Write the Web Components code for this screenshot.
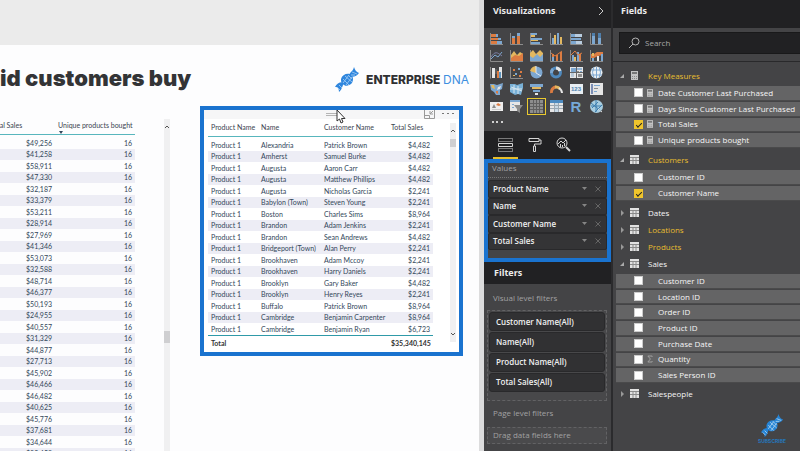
<!DOCTYPE html>
<html lang="en">
<head>
<meta charset="utf-8">
<title>Report editor</title>
<style>
html,body{height:100%}
body{margin:0;overflow:hidden;background:#fff;font-family:"Open Sans","Noto Sans",sans-serif;font-size:8px}
report-editor{height:100%}
</style>
</head>
<body>
<report-editor></report-editor>
<script>
const sold = "49,256 41,258 58,911 47,330 32,187 33,379 53,211 28,914 27,969 41,346 53,073 32,588 48,714 46,377 50,193 24,955 40,557 31,329 44,877 27,713 45,902 46,466 46,482 40,625 45,776 37,681 34,644 32,459".split(" ");
const TABLES = {
  products: {
    widths: [68, 80], align: ["h", "n"],
    head: ["Total Sales", "Unique products bought"],
    rows: sold.map(v => ["$" + v, "16"])
  },
  customers: {
    widths: [50, 63, 67, 45], align: ["", "", "", "h"],
    head: ["Product Name", "Name", "Customer Name", "Total Sales"],
    rows: [
      ["Alexandria", "Patrick Brown", "$4,482"], ["Amherst", "Samuel Burke", "$4,482"],
      ["Augusta", "Aaron Carr", "$4,482"], ["Augusta", "Matthew Phillips", "$4,482"],
      ["Augusta", "Nicholas Garcia", "$2,241"], ["Babylon (Town)", "Steven Young", "$2,241"],
      ["Boston", "Charles Sims", "$8,964"], ["Brandon", "Adam Jenkins", "$2,241"],
      ["Brandon", "Sean Andrews", "$4,482"], ["Bridgeport (Town)", "Alan Perry", "$2,241"],
      ["Brookhaven", "Adam Mccoy", "$2,241"], ["Brookhaven", "Harry Daniels", "$2,241"],
      ["Brooklyn", "Gary Baker", "$4,482"], ["Brooklyn", "Henry Reyes", "$2,241"],
      ["Buffalo", "Patrick Brown", "$8,964"], ["Cambridge", "Benjamin Carpenter", "$8,964"],
      ["Cambridge", "Benjamin Ryan", "$6,723"]
    ].map(r => ["Product 1", ...r]),
    foot: ["Total", "", "", "$35,340,145"]
  }
};

const B = "#7da7d0", O = "#dc7c42", W = "#e6e6e6", G = "#8c8c8c", Y = "#e3b860";
const bar = (x, y, w, h, c) => `<rect x="${x}" y="${y}" width="${w}" height="${h}" fill="${c}"/>`;
const ln = (d, c, w = 1) => `<path d="${d}" fill="none" stroke="${c}" stroke-width="${w}"/>`;
const fl = (d, c) => `<path d="${d}" fill="${c}"/>`;
const axes = ln("M1.5 1V12.5H14", G);
const VISUALS = {
  "Stacked bar chart": axes + bar(2,2,5,3,O)+bar(7,2,2,3,B)+bar(2,6,7,2,O)+bar(9,6,3,2,B)+bar(2,9,6,3,O)+bar(8,9,5,3,B),
  "Stacked column chart": axes + bar(3,6,3,6,O)+bar(3,4,3,2,B)+bar(8,4,3,8,O)+bar(8,1,3,3,B),
  "Clustered bar chart": axes + bar(2,1,6,2,B)+bar(2,3,4,2,Y)+bar(2,6,11,2,B)+bar(2,8,7,1,Y)+bar(2,10,9,2,B),
  "Clustered column chart": axes + bar(3,6,2,6,B)+bar(5,3,2,9,Y)+bar(8,1,2,11,B)+bar(11,5,2,7,Y),
  "100% stacked bar chart": axes + bar(2,2,4,3,B)+bar(6,2,7,3,"#b9cde0")+bar(2,6,10,2,B)+bar(2,9,5,3,B)+bar(7,9,6,3,"#b9cde0"),
  "100% stacked column chart": axes + bar(3,1,3,11,B)+bar(3,1,3,3,"#4f7eaa")+bar(9,1,3,11,B)+bar(9,1,3,5,"#4f7eaa"),
  "Line chart": axes + ln("M2 10L6 6L9 8L13 3", B)+ln("M2 8C6 2 8 3 13 7", "#7c7fa6"),
  "Area chart": axes + fl("M2 12V6L5 2L8 6L11 3L14 5V12Z", Y)+fl("M2 12V9L6 6L10 7L14 4V12Z", O),
  "Stacked area chart": axes + fl("M1 12V4L4 1L7 5L11 1L14 4V12Z", Y)+fl("M1 12V7L4 9L8 5L11 8L14 5V12Z", B),
  "Line and stacked column chart": axes + bar(3,7,2,5,B)+bar(3,5,2,3,O)+bar(7,6,2,6,O)+bar(11,3,2,9,O)+ln("M2 4L6 7L9 5L13 2", O),
  "Line and clustered column chart": axes + bar(3,6,2,6,B)+bar(5,8,2,4,Y)+bar(8,3,2,9,B)+bar(10,5,2,7,O)+ln("M2 6L6 2L9 6L13 4", O),
  "Ribbon chart": axes + fl("M2 5H5L8 3H14V6L9 7L5 9H2Z", O)+bar(3,9,2,3,B)+bar(8,7,2,5,W)+bar(12,5,2,7,B)+bar(3,4,2,3,Y),
  "Waterfall chart": ln("M1.5 1V12.5", G)+bar(3,2,3,10,W)+bar(6,3,2,5,"#5d5d5d")+bar(8,5,2,7,O)+bar(10,1,3,11,W)+bar(10,6,2,6,"#5b93bd"),
  "Scatter chart": axes + bar(4,3,2,2,O)+bar(9,2,2,2,B)+bar(6,7,2,2,B)+bar(11,5,2,2,O)+bar(4,9,2,1,Y)+bar(10,9,2,2,O),
  "Pie chart": `<circle cx="7.5" cy="6.5" r="6" fill="${B}"/>`+fl("M7 7V0A7 7 0 0 0 1 5Z", Y)+ln("M7 0V7L12 10", "#dce6f0"),
  "Donut chart": `<circle cx="7" cy="6.5" r="4.5" fill="none" stroke="#4f89bd" stroke-width="3"/>`+ln("M7 2A4.5 4.5 0 0 1 11 5", W, 3)+ln("M2.5 7A4.5 4.5 0 0 1 4 3", B, 3),
  "Treemap": bar(1,1,13,11,W)+bar(2,2,5,4,B)+bar(8,2,5,2,"#93b4d3")+bar(8,5,2,2,G)+bar(11,5,2,2,B)+bar(2,7,3,4,"#b8c9d8")+bar(9,8,4,3,G)+ln("M1 6.5H14M7.5 1V12", "#666"),
  "Map": `<circle cx="7.5" cy="6.5" r="6" fill="#eef2f5"/>`+ln("M2 4H13M2 9H13M7.5 1V12M5 1Q2 6 5 12M10 1Q13 6 10 12", B),
  "Filled map": fl("M1 1L5 1L8 2L14 0L13 6L11 7L11 12L7 12L5 9L2 7Z", B)+fl("M2 2L5 2L6 6L3 5Z", Y)+fl("M9 4L12 3L11 6L8 7Z", W)+fl("M7 8L9 8L9 11L7 10Z", O),
  "Shape map": fl("M1 1L6 1L8 2L14 0L14 5L13 8L12 12L9 11L6 12L1 9Z", "#78b0d6")+ln("M1 6H13M5 2V10M9 3V11M2 4L13 8", "#d6e6f0"),
  "Funnel": bar(1,1,13,3,B)+bar(3,4,9,2,Y)+bar(4,7,7,2,B)+bar(6,10,3,2,W),
  "Gauge": ln("M2.5 10A5 5 0 0 1 7 4", O, 3)+ln("M6 4A5 5 0 0 1 11 6", Y, 3)+ln("M10 5Q13 7 13 10", W, 2),
  "Card": bar(1,1,13,10,"#e8eef3")+`<text x="7" y="8" font-size="6" font-weight="700" font-family="Liberation Sans,sans-serif" text-anchor="middle" fill="#4e83b0">123</text>`,
  "Multi-row card": bar(1,0,13,12,W)+bar(2,1,2,10,"#7c8eb5")+bar(5,2,6,1,B)+bar(5,5,4,1,G)+bar(5,8,3,1,B),
  "KPI": bar(1,2,13,9,"#eeeeee")+fl("M3 8L5 4L7 8Z", G)+fl("M7 5L9 3L12 5L10 6Z", O)+ln("M3 9.5H12", "#ccc"),
  "Slicer": bar(1,0,10,11,W)+bar(1,0,10,2,B)+bar(3,4,2,1,B)+bar(3,7,2,1,B)+fl("M5 5H14L11 9V13L8 11V9Z", G),
  "Table": bar(1,0,13,13,"#8d8d8d")+ln("M1 3.5H14M1 6.5H14M1 9.5H14M4.5 0V13M7.5 0V13M10.5 0V13", "#606060"),
  "Matrix": bar(1,0,13,12,W)+bar(1,0,13,3,"#4d8bc0")+bar(6,3,4,9,"#c8d9e6")+ln("M5.5 3V12M9.5 3V12M1 5.5H14M1 8.5H14", "#9aa8b3"),
  "R script visual": `<text x="7" y="12" font-size="15" font-weight="700" font-family="Liberation Sans,sans-serif" text-anchor="middle" fill="#76a9d8">R</text>`,
  "ArcGIS map": `<circle cx="7.5" cy="6.5" r="6.5" fill="#a8cde0"/>`+ln("M2 3L12 11M3 8L9 2M6 12L13 5M2 6H12M7 0V12", "#3e7fae")+ln("M9 9L13 12", W)
};

const dna = (a, b) => `
  <path d="M1 20C3 16 7 14 11 16C8 17 9 22 5 25C5 22 4 20 1 20Z" fill="${a}"/>
  <path d="M15 9C16 4 19 5 20 0C21 3 22 5 25 6C23 9 19 11 15 9Z" fill="${a}"/>
  <path d="M7 12C8 8 12 6 16 7C19 9 20 12 18 16C15 19 11 20 9 17C7 16 7 14 7 12Z" fill="${a}"/>
  <path d="M3 20L6 23M5 18L8 21M9 12L15 18M11 9L18 15M14 8L18 12M17 8L21 8M18 5L23 7M9 16L15 8M12 18L18 10" stroke="${b}" stroke-width="1" fill="none"/>`;

const define = (name, css, html) => customElements.define(name, class extends HTMLElement {
  connectedCallback() {
    if (this.shadowRoot) return;
    const root = this.attachShadow({ mode: "open" });
    root.innerHTML = `<style>*{box-sizing:border-box}${css}</style>` + (typeof html === "function" ? html(this) : html);
  }
});

define("report-editor", `
  :host{display:grid;grid-template-columns:minmax(0,1fr) 128px 188px;overflow:hidden}
`, `<report-canvas></report-canvas><viz-panel></viz-panel><fields-panel></fields-panel>`);

define("data-table", `
  :host{display:block;font:7px/9px Lato,"Open Sans",sans-serif;color:#33475a}
  table{border-collapse:separate;border-spacing:0;table-layout:fixed;width:100%}
  th,td{padding:0 3px;white-space:nowrap;text-align:left;font-weight:400}
  thead th{height:18px;border-bottom:1px solid #58b6bd;color:#3b4450;vertical-align:top;padding-top:4px;position:relative}
  tbody:before{content:"";display:block;height:2px}
  .h,th.n{text-align:right} td.n{text-align:right}
  thead th.h{text-align:left}
  tbody tr:nth-child(even) td{background:#ededf5}
  tbody td{height:11px}
  tbody tr:nth-child(odd) td{height:12px}
  tfoot td{border-top:1px solid #2f9aa8;height:15px;font-weight:700;color:#333}
  i{position:absolute;left:4px;bottom:0;border:2px solid transparent;border-top:3px solid #33475a;border-bottom:0}
`, el => {
  const t = TABLES[el.getAttribute("source")];
  const cells = (r, tag) => r.map((c, i) => `<${tag} class="${t.align[i]}">${c}${tag === "th" && t.align[i] === "n" ? "<i></i>" : ""}</${tag}>`).join("");
  return `<table><colgroup>${t.widths.map(w => `<col style="width:${w}px">`).join("")}</colgroup>
    <thead><tr>${cells(t.head, "th")}</tr></thead>
    <tbody>${t.rows.map(r => `<tr>${cells(r, "td")}</tr>`).join("")}</tbody>
    ${t.foot ? `<tfoot><tr>${cells(t.foot, "td")}</tr></tfoot>` : ""}</table>`;
});

define("scroll-rail", `
  :host{display:flex;flex-direction:column;width:6px;background:#f0f0f1}
  svg{display:block;width:6px;height:6px;flex:none;margin:5px 0}
  i{flex:none;height:var(--thumb,8px);background:#cfcfd1}
  :host([open-ended]) .end{display:none}
  .lead{flex:0 1 var(--lead,0px)} .rest{flex:1}
  path{fill:none;stroke:#555}
`, `<svg viewBox="0 0 6 6"><path d="M1 4L3 2L5 4"/></svg><span class="lead"></span><i></i><span class="rest"></span><svg class="end" viewBox="0 0 6 6"><path d="M1 2L3 4L5 2"/></svg>`);

define("brand-logo", `
  :host{display:flex;align-items:center;gap:6px;font:800 12px/16px Inter,sans-serif;color:#2f3032}
  svg{width:26px;height:26px} span span{font-weight:400;color:#3d8fe0}
`, `<svg viewBox="0 0 26 26">${dna("#2f86dd", "#8fc1f2")}</svg><span>ENTERPRISE <span>DNA</span></span>`);

define("report-visual", `
  :host{display:block;border:4px solid #1a73cf;background:#fff;position:relative}
  header{display:grid;grid-template-columns:1fr 12px 1fr;align-items:center;height:9px;padding:0 5px;background:#f6f6f7}
  header svg{height:9px}
  .grip{height:3px;border:1px solid #b5b5b5;border-width:1px 0}
  .tools{display:flex;justify-content:flex-end;gap:7px}
  .body{display:flex;justify-content:space-between;gap:17px;padding:0 3px 2px 4px}
  ::slotted(data-table){flex:1}
  ::slotted(scroll-rail){margin:4px 0 8px}
  .cursor{position:absolute;left:132px;top:0;width:10px;height:14px}
`, `<header><span></span><span class="grip"></span>
  <span class="tools"><svg width="11" viewBox="0 0 11 9"><path d="M.5 0V8.5H10.5V0M.5 5.5H5.5V8M6 4L9 1M6 1V4H9" fill="none" stroke="#999"/></svg>
  <svg width="12" viewBox="0 0 12 9"><path d="M0 3h2v1H0zM5 3h2v1H5zM10 3h2v1h-2z" fill="#777"/></svg></span></header>
  <div class="body"><slot></slot></div>
  <svg class="cursor" viewBox="0 0 10 14"><path d="M1 0V11L3.5 9L5 13L7 12L5.5 8.5H9Z" fill="#fff" stroke="#333"/></svg>`);

define("report-canvas", `
  :host{display:flex;min-width:0;min-height:0;background:#ebebeb;padding-top:45px}
  main{flex:1;min-width:0;background:#fdfdfe;display:flex;flex-direction:column;overflow:hidden}
  .rail{width:5px;background:#dcdcdd;margin-top:-45px}
  .top{display:flex;justify-content:space-between;align-items:center;height:61px;padding:6px 10px 0 0;flex:none}
  h1{margin:0 0 2px;font:900 22px/26px Inter,"Open Sans",sans-serif;color:#333436;white-space:nowrap}
  brand-logo{margin-top:2px}
  .visuals{display:flex;align-items:flex-start;justify-content:space-between;padding-right:16px;min-height:0;flex:1}
  .left{display:flex;height:100%;width:170px;padding-top:11px;overflow:hidden;justify-content:space-between}
  .left data-table{flex:none;width:148px;margin-left:-13px}
  .left scroll-rail{--lead:196px;--thumb:12px;margin-top:2px}
  report-visual{width:263px}
`, `<main><div class="top"><h1>id customers buy</h1><brand-logo></brand-logo></div>
  <div class="visuals"><div class="left"><data-table source="products"></data-table><scroll-rail open-ended></scroll-rail></div>
  <report-visual><data-table source="customers"></data-table><scroll-rail></scroll-rail></report-visual></div></main><div class="rail"></div>`);

define("viz-icon", `
  :host{display:block}
  button{display:grid;place-items:center;width:100%;height:17px;padding:0;border:0;background:none}
  svg{width:15px;height:13px;overflow:visible}
  :host([selected]) svg{outline:1px solid #e9c92f;outline-offset:1px}
`, el => `<button aria-label="${el.getAttribute("name")}"><svg viewBox="0 0 15 13">${VISUALS[el.getAttribute("name")]}</svg></button>`);

define("field-well", `
  :host{display:flex;align-items:center;gap:7px;flex:1;padding:0 5px 0 4px;background:#343436;border:1px solid #29292b;border-radius:2px;color:#f0f0f0;font-weight:600}
  span{flex:1} button{all:unset;display:flex}
  svg{width:6px;height:6px}
`, `<span><slot></slot></span><button aria-label="Options"><svg viewBox="0 0 6 6"><path d="M0 1H5L2.5 4Z" fill="#858585"/></svg></button><button aria-label="Remove"><svg viewBox="0 0 6 6"><path d="M.5 .5L5.5 5.5M5.500 .5L.5 5.5" stroke="#666"/></svg></button>`);

define("filter-chip", `
  :host{display:flex;align-items:center;flex:1;padding:0 6px;background:#313133;border:1px solid #29292b;border-radius:3px;color:#f0f0f0;font-weight:600}
`, `<slot></slot>`);

define("viz-panel", `
  :host{display:flex;flex-direction:column;min-width:0;background:#444446;color:#a2a2a3;line-height:12px;border-right:1px solid #2b2b2d}
  h2{margin:0;display:flex;align-items:center;justify-content:space-between;font-size:9px;line-height:12px;font-weight:700;color:#ececec;background:#212123;flex:none}
  h2.main{height:28px;padding:0 7px 6px 9px}
  h2 button{all:unset;display:flex} h2 svg{width:6px;height:10px}
  .gallery{display:grid;grid-template-columns:repeat(6,1fr);padding:2px 5px 0 3px;flex:none}
  .more{height:16px;padding:6px 0 0 8px;flex:none} .more svg{display:block;width:11px;height:2px}
  nav{display:flex;gap:4px;height:28px;background:#212123;padding:0 9px;flex:none}
  nav button{all:unset;width:25px;display:grid;place-items:center;border-bottom:2px solid transparent}
  nav button.on{border-color:#e6bd2b}
  nav svg{width:15px;height:15px;fill:none;stroke:#d5d5d5}
  .values{border:4px solid #1a73cf;height:103px;display:flex;flex-direction:column;flex:none;padding-bottom:8px}
  .values>p{margin:0 0 2px;height:15px;line-height:10px;padding:0 4px;border-bottom:1px dotted #777}
  .filters{height:22px;padding:0 10px}
  .label{margin:0;padding:0 9px;flex:none} .label.first{padding-top:8px}
  .box{margin:6px 4px 6px 3px;border:1px dashed #626264;height:91px;padding:1px 1px 8px;display:flex;flex-direction:column;gap:1px;flex:none;background:#48484a}
  .drop{margin:8px 4px 0 3px;border:1px dashed #626264;height:17px;line-height:14px;padding:0 5px;flex:none;background:#4a4a4c;color:#a0a0a1}
`, `<h2 class="main">Visualizations <button aria-label="Collapse"><svg viewBox="0 0 6 10"><path d="M1 1L5 5L1 9" fill="none" stroke="#ccc"/></svg></button></h2>
  <div class="gallery">${Object.keys(VISUALS).map(n => `<viz-icon name="${n}"${n === "Table" ? " selected" : ""}></viz-icon>`).join("")}</div>
  <div class="more"><svg viewBox="0 0 11 2"><path d="M0 0h2v2H0zM4 0h2v2H4zM9 0h2v2H9z" fill="#d0d0d0"/></svg></div>
  <nav><button class="on" aria-label="Fields"><svg viewBox="0 0 15 15"><path d="M.5 6.5H14.5V9.5H.5Z"/><path d="M.5 1.5H14.5V4.5H.5ZM.5 11.5H14.5V14.5H.5Z" stroke-dasharray="1 1"/></svg></button>
  <button aria-label="Format"><svg viewBox="0 0 15 15"><path d="M2 1.5H12V4.5H2ZM12 3H14V7H7.5V9M6.5 9H8.5V14.5H6.5Z"/></svg></button>
  <button aria-label="Analytics"><svg viewBox="0 0 15 15"><circle cx="6" cy="6" r="5"/><path d="M10 10L14 14" stroke-width="2"/><path d="M2 7L5 4L7 6L10 3M4.5 10V7M6.5 10V8M8.5 9V6"/></svg></button></nav>
  <section class="values"><p>Values</p><field-well>Product Name</field-well><field-well>Name</field-well><field-well>Customer Name</field-well><field-well>Total Sales</field-well></section>
  <h2 class="filters">Filters</h2>
  <p class="label first">Visual level filters</p>
  <div class="box"><filter-chip>Customer Name(All)</filter-chip><filter-chip>Name(All)</filter-chip><filter-chip>Product Name(All)</filter-chip><filter-chip>Total Sales(All)</filter-chip></div>
  <p class="label">Page level filters</p><div class="drop">Drag data fields here</div>`);

const CALC = `<svg viewBox="0 0 7 9"><path d="M0 0H7V9H0Z" fill="#c4c4c4"/><path d="M1 1H6V3H1Z" fill="#777"/><path d="M1 5.5H6M1 7.5H6" stroke="#888" stroke-dasharray="1 1"/></svg>`;
const GRID = `<svg viewBox="0 0 9 9"><path d="M0 0H9V9H0Z" fill="#e2e2e2"/><path d="M0 2.5H9M0 5.5H9M3 2V9M6 2V9" stroke="#8a8a8a" fill="none"/></svg>`;
const SIGMA = `<svg viewBox="0 0 7 9"><path d="M6 2V1H1L4 4.5L1 8H6V7" fill="none" stroke="#aaa"/></svg>`;

define("field-row", `
  :host{display:flex;background:#646465;color:#f6f6f6;min-height:0}
  label{display:flex;align-items:center;flex:1;padding-left:18px;white-space:nowrap}
  input{appearance:none;margin:0 4px 0 0;width:9px;height:9px;background:#fff;border:1px solid #ccc;display:grid;place-items:center;flex:none}
  input:checked{background:#f0c52c;border-color:#f0c52c}
  input:checked:after{content:"";width:5px;height:2px;border:solid #222;border-width:0 0 1px 1px;transform:rotate(-45deg)}
  .k{width:11px;display:flex} .k svg{width:6px;height:8px}
`, el => `<label><input type="checkbox"${el.hasAttribute("checked") ? " checked" : ""}><span class="k">${({ calc: CALC, sum: SIGMA })[el.getAttribute("kind")] || ""}</span><slot></slot></label>`);

define("field-group", `
  :host{display:block;color:#f6f6f6}
  :host([used]){color:#e8be30}
  button{all:unset;display:flex;align-items:center;height:17px;padding-left:6px}
  .a{width:6px;height:6px;margin-right:5px} .t{width:18px;display:flex} .t svg{width:9px;height:9px}
  .rows{display:none}
  :host([open]) .rows{display:grid;grid-auto-rows:1fr;gap:1px;padding:2px 0 0 3px;margin-bottom:3px;height:var(--rows)}
  :host([open][name="Sales"]) .rows{margin-bottom:2px}
  ::slotted(field-row){border-bottom:1px solid #4a4a4b}
`, el => `<button><svg class="a" viewBox="0 0 6 6">${el.hasAttribute("open") ? '<path d="M5 1V5H1Z" fill="#aaa"/>' : '<path d="M2 0L5 3L2 6Z" fill="#999"/>'}</svg><span class="t">${el.hasAttribute("measures") ? CALC : GRID}</span>${el.getAttribute("name")}</button><div class="rows"><slot></slot></div>`);

define("fields-panel", `
  :host{display:flex;flex-direction:column;min-width:0;background:#444446;border-left:1px solid #2b2b2d;line-height:12px;overflow:hidden;position:relative}
  h2{margin:0;height:28px;padding:5px 8px 0;font-size:9px;line-height:12px;font-weight:700;color:#ececec;background:#212123;flex:none}
  .search{display:flex;align-items:center;gap:5px;margin:4px 0 7px 6px;height:22px;padding-left:8px;background:#212123;border:1px solid #19191a;border-right:0;flex:none}
  .search svg{width:12px;height:12px}
  input{all:unset;flex:1;min-width:0;font-size:8px;color:#ccc} input::placeholder{color:#a8a8a8}
  .tree{border-top:1px solid #29292b;padding-top:5px}
  .mark{position:absolute;right:12px;bottom:7px;width:32px;display:grid;justify-items:center;font:700 5px/6px Inter,sans-serif;color:#2577bd}
  .mark svg{width:24px;height:24px}
`, `<h2>Fields</h2>
  <label class="search"><svg viewBox="0 0 12 12"><circle cx="7.5" cy="4.5" r="3.5" fill="none" stroke="#b5b5b5"/><path d="M5 7L1 11" stroke="#b5b5b5"/></svg><input type="text" aria-label="Search" placeholder="Search"></label>
  <div class="tree">
  <field-group open used measures name="Key Measures" style="--rows:64px"><field-row kind="calc">Date Customer Last Purchased</field-row><field-row kind="calc">Days Since Customer Last Purchased</field-row><field-row kind="calc" checked>Total Sales</field-row><field-row kind="calc">Unique products bought</field-row></field-group>
  <field-group open used name="Customers" style="--rows:33px"><field-row>Customer ID</field-row><field-row checked>Customer Name</field-row></field-group>
  <field-group name="Dates"></field-group><field-group used name="Locations"></field-group><field-group used name="Products"></field-group>
  <field-group open name="Sales" style="--rows:111px"><field-row>Customer ID</field-row><field-row>Location ID</field-row><field-row>Order ID</field-row><field-row>Product ID</field-row><field-row>Purchase Date</field-row><field-row kind="sum">Quantity</field-row><field-row>Sales Person ID</field-row></field-group>
  <field-group name="Salespeople"></field-group></div>
  <div class="mark"><svg viewBox="0 0 26 26">${dna("#2584d6", "#a4cdec")}</svg><span>SUBSCRIBE</span></div>`);
</script>
</body>
</html>
